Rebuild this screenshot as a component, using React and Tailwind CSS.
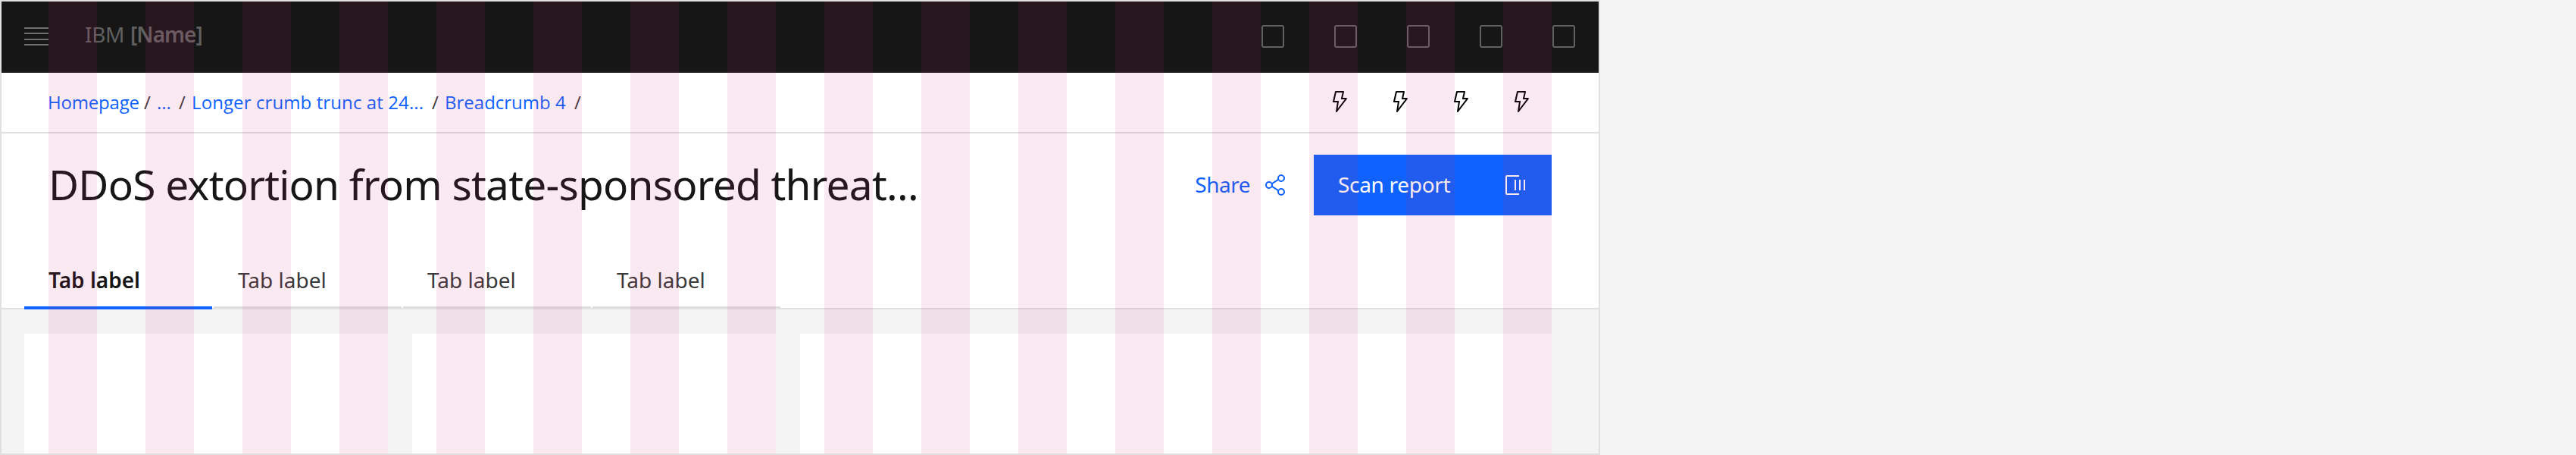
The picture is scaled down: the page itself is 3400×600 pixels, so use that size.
function Bolt() {
  return (
    <svg className="size-8" viewBox="0 0 32 32" fill="black">
      <path d="M11.61 29.92a1 1 0 0 1-.6-1.07L12.83 17H8a1 1 0 0 1-1-1.23l3-13A1 1 0 0 1 11 2h10a1 1 0 0 1 .78.37 1 1 0 0 1 .2.85L20.25 11H25a1 1 0 0 1 .9.56 1 1 0 0 1-.11 1l-13 17A1 1 0 0 1 12 30a1.09 1.09 0 0 1-.39-.08ZM17.75 13l2-9H11.8L9.26 15h5.91l-1.59 10.28L23 13Z" />
    </svg>
  );
}

function ShareIcon() {
  return (
    <svg className="size-8" viewBox="0 0 32 32" fill="currentColor">
      <path d="M23 20a5 5 0 0 0-3.89 1.89l-7.31-4.57a4.46 4.46 0 0 0 0-2.64l7.31-4.57A5 5 0 1 0 18 7a4.79 4.79 0 0 0 .2 1.32l-7.31 4.57a5 5 0 1 0 0 6.22l7.31 4.57A4.79 4.79 0 0 0 18 25a5 5 0 1 0 5-5Zm0-16a3 3 0 1 1-3 3 3 3 0 0 1 3-3ZM7 19a3 3 0 1 1 3-3 3 3 0 0 1-3 3Zm16 9a3 3 0 1 1 3-3 3 3 0 0 1-3 3Z" />
    </svg>
  );
}

function ScanIcon() {
  return (
    <svg className="size-8" viewBox="0 0 32 32" fill="none" stroke="white" strokeWidth="2">
      <path d="M21 4H5a1 1 0 0 0-1 1v22a1 1 0 0 0 1 1h16M16 9v14M22 9v14M28 9v14" />
    </svg>
  );
}

const tabs = ["Tab label", "Tab label", "Tab label", "Tab label"];

export default function App() {
  return (
    <div className="h-[600px] w-[3400px] overflow-hidden bg-[#f4f4f4] font-['Noto_Sans','Open_Sans',sans-serif]">
      <div className="relative flex h-[600px] w-[2112px] flex-col border-2 border-[#e0e0e0]">
        <header className="flex h-[94px] shrink-0 items-center border-b-2 border-[#1d1d1d] bg-[#161616] pr-[31px] pl-[30px] text-[28px] text-[#606060]">
          <div className="flex h-6 w-8 flex-col justify-between">
            <span className="h-0.5 bg-[#6f6f6f]" />
            <span className="h-0.5 bg-[#6f6f6f]" />
            <span className="h-0.5 bg-[#6f6f6f]" />
            <span className="h-0.5 bg-[#6f6f6f]" />
          </div>
          <div className="ml-12 flex pb-1.5 whitespace-nowrap">
            <span className="w-[60px] tracking-[-0.3px]">IBM</span>
            <span className="font-semibold tracking-[-0.9px]">[Name]</span>
          </div>
          <div className="ml-auto flex gap-[66px]">
            {[0, 1, 2, 3, 4].map((i) => (
              <span key={i} className="size-[30px] rounded-[3px] border-2 border-[#616161]" />
            ))}
          </div>
        </header>

        <nav className="flex h-20 shrink-0 items-center justify-between border-b-2 border-[#e0e0e0] bg-white pr-[86px] pl-[61px]">
          <div className="flex whitespace-nowrap font-['Open_Sans',sans-serif] text-2xl text-[#0f62fe]">
            <span className="w-[127px] tracking-[-0.2px]">Homepage</span>
            <span className="w-[17px] text-[#393939]">/</span>
            <span className="w-[29px]">...</span>
            <span className="w-[17px] text-[#393939]">/</span>
            <span className="w-[317px] tracking-[0.1px]">Longer crumb trunc at 24...</span>
            <span className="w-[17px] text-[#393939]">/</span>
            <span className="w-[171px]">Breadcrumb 4</span>
            <span className="text-[#393939]">/</span>
          </div>
          <div className="flex gap-12 pb-0.5">
            <Bolt />
            <Bolt />
            <Bolt />
            <Bolt />
          </div>
        </nav>

        <section className="flex h-[232px] shrink-0 flex-col justify-between border-b-2 border-[#e0e0e0] bg-white">
          <div className="flex h-[108px] items-end px-[62px]">
            <h1 className="mr-auto flex h-20 items-center pb-0.5 text-[55px] tracking-[-0.78px] whitespace-nowrap text-[#161616]">
              DDoS extortion from state-sponsored threat...
            </h1>
            <button className="mr-[34px] flex h-20 items-center gap-[18px] text-[28px] tracking-[-0.5px] text-[#0f62fe]">
              <span className="pb-0.5">Share</span>
              <ShareIcon />
            </button>
            <button className="flex h-20 w-[314px] items-center justify-between bg-[#0f62fe] px-8 text-[28px] tracking-[-0.3px] text-white">
              <span className="pb-0.5">Scan report</span>
              <ScanIcon />
            </button>
          </div>
          <div className="-mb-0.5 flex gap-0.5 pl-[30px]">
            {tabs.map((t, i) => (
              <div
                key={i}
                className={
                  i === 0
                    ? "flex h-20 w-[248px] items-center border-b-4 border-[#0f62fe] pt-1.5 pl-8 text-[28px] font-semibold text-[#161616]"
                    : "flex h-20 w-[248px] items-center border-b-4 border-[#e0e0e0] pt-1.5 pl-8 text-[28px] text-[#393939]"
                }
              >
                {t}
              </div>
            ))}
          </div>
        </section>

        <main className="flex grow gap-8 bg-[#f4f4f4] pt-8 pl-[30px]">
          <div className="w-[480px] bg-white" />
          <div className="w-[480px] bg-white" />
          <div className="w-[992px] bg-white" />
        </main>

        <div className="pointer-events-none absolute inset-0 flex gap-16 pl-[62px]">
          {Array.from({ length: 16 }, (_, i) => (
            <span key={i} className="w-16 shrink-0 bg-[#d02670]/10" />
          ))}
        </div>
      </div>
    </div>
  );
}
